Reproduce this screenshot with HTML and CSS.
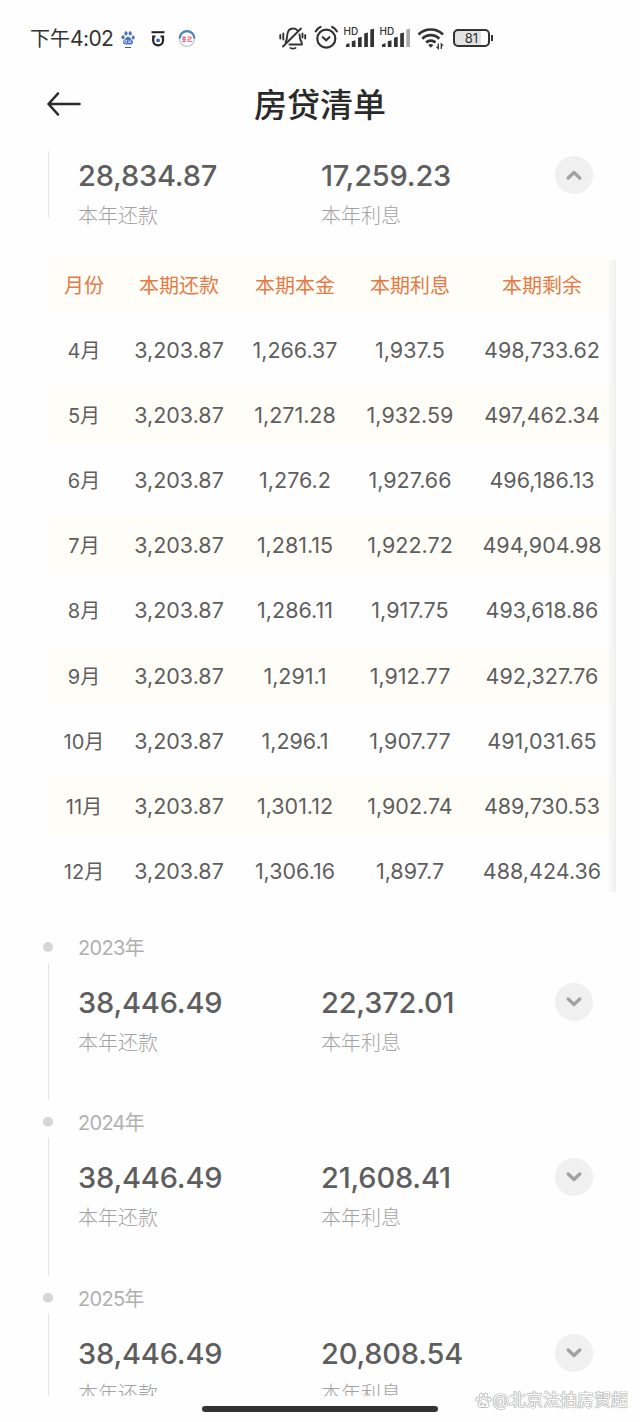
FILE: index.html
```html
<!DOCTYPE html>
<html lang="zh-CN">

<head>
    <meta charset="utf-8">
    <title>房贷清单</title>
    <meta name="viewport" content="width=device-width, initial-scale=1">
    <link rel="stylesheet" href="styles.css">
</head>

<body>
    <div class="status">
        <div class="status-left">
            <span class="time">下午<b>4:02</b></span>
            <svg class="ico-paw" width="14" height="20" viewBox="0 0 14 20">
                <g fill="#4a72c4">
                    <ellipse cx="2" cy="8.2" rx="1.6" ry="2" />
                    <ellipse cx="5" cy="4.4" rx="1.6" ry="2.1" />
                    <ellipse cx="9.2" cy="4.4" rx="1.6" ry="2.1" />
                    <ellipse cx="12.2" cy="8.4" rx="1.5" ry="2" />
                    <path d="M7 7.800c2 0 2.600 2 4 3.200 1.600 1.400 1.400 4.400-1.200 4.400H4.400C1.600 15.400 1.400 12.400 3 11c1.400-1.200 2-3.200 4-3.200z" />
                </g>
                <path d="M5.300 11.500a1.300 1.300 0 1 0 .1 2.200v-2.800M7.800 11.300v2.300h1.900v-2.300" fill="none" stroke="#fff" stroke-width=".7" />
                <path d="M4 18.500h6" stroke="#555" stroke-width="1" />
            </svg>
            <svg class="ico-app" width="14" height="18" viewBox="0 0 14 18">
                <path d="M.5 2.200h13" stroke="#222" stroke-width="2" />
                <path d="M4.500 6.500H2.200v4a4.900 4.900 0 0 0 9.800 0v-4H9.500" fill="none" stroke="#222" stroke-width="2.200" />
                <circle cx="7.100" cy="10.300" r="1.900" fill="#3f63b4" />
            </svg>
            <svg class="ico-badge" width="18" height="18" viewBox="0 0 18 18">
                <circle cx="9" cy="9" r="7.400" fill="#fff" stroke="#b9cdd3" stroke-width="1.400" />
                <path d="M1.600 8.500a7.400 7.400 0 0 1 14.800 0" fill="none" stroke="#4a83bd" stroke-width="2.200" />
                <path d="M4 7.300h4M4 9.300h4M4 11.300h4M6 6.500v4.800M9.500 7h3.500v2H10v2.300h4.200" fill="none" stroke="#dc5a80" stroke-width="1" />
            </svg>
        </div>
        <div class="status-right">
            <svg width="28" height="28" viewBox="279 24 28 28" fill="none" stroke="#333" stroke-width="1.900" stroke-linecap="round">
                <path d="M283 46.500L301 28.500" />
                <path d="M285.500 42c1.500-1.800 1.600-3.600 1.700-6.200.2-4.500 2.500-7.300 6-7.300 1.800 0 3.200.7 4.200 1.800M299.500 34.500c.3 4 .5 5.700 2.300 8.300v1.700H289.500" />
                <path d="M290.500 48c1.500.8 3.500.8 5 0" />
                <path d="M280.300 35v3.500M283.300 33.500v6M305.200 35v3.500M302.500 33.500v4" />
            </svg>
            <svg class="ico-alarm" width="24" height="26" viewBox="314 25 24 26" fill="none" stroke="#333" stroke-width="2.200" stroke-linecap="round">
                <circle cx="326.300" cy="38.700" r="9" />
                <path d="M315.800 31.300c1-2 2.600-3.500 4.600-4.300M336.800 31.300c-1-2-2.600-3.500-4.600-4.300" />
                <path d="M322.800 37.200l3.300 3 3.300-3" />
            </svg>
            <svg class="ico-signal" width="32" height="24" viewBox="343 26 32 24">
                <text x="343.500" y="35.200" class="hd">HD</text>
                <path d="M346 44.500l3.500-1.500v4H346zM351.800 41.300l3.700-1V47h-3.700zM358 37.700l3.700-1V47H358zM364.200 33.500l3.700-1V47h-3.700zM370.300 29.500l3.700-.8V47h-3.700z" fill="#333" />
            </svg>
            <svg class="ico-signal" width="32" height="24" viewBox="343 26 32 24">
                <text x="343.500" y="35.200" class="hd">HD</text>
                <path d="M346 44.500l3.500-1.500v4H346zM351.800 41.300l3.700-1V47h-3.700zM358 37.700l3.700-1V47H358zM364.200 33.500l3.700-1V47h-3.700z" fill="#333" />
                <path d="M370.300 29.500l3.700-.8V47h-3.700z" fill="#aaa" />
            </svg>
            <svg class="ico-wifi" width="28" height="24" viewBox="417 27 28 24" fill="none" stroke="#333" stroke-width="2.700">
                <path d="M418.500 34.500a17.500 17.500 0 0 1 24.500 0M422.300 38.700a12 12 0 0 1 17 0M426.100 42.500a6.800 6.800 0 0 1 9.400 0" />
                <path d="M430.800 47.800l-2.600-2.700a4 4 0 0 1 5.200 0z" fill="#333" stroke="none" />
                <path d="M438.300 43.500v5l-1.700-1.700M441.300 49v-5l1.700 1.700" stroke-width="1.300" />
            </svg>
            <div class="battery">81</div>
        </div>
    </div>

    <div class="header">
        <svg class="back" width="36" height="26" viewBox="0 0 36 26" fill="none" stroke="#2a2a2a" stroke-width="2.600" stroke-linecap="round" stroke-linejoin="round">
            <path d="M12 2.500L2.500 13 12 23.500M2.500 13H33.500" />
        </svg>
        <h1>房贷清单</h1>
    </div>

    <div class="list">
        <div class="year year-open">
            <div class="rail"><i class="line"></i></div>
            <div class="sums">
                <div class="sum">
                    <p class="num">28,834.87</p>
                    <p class="txt">本年还款</p>
                </div>
                <div class="sum">
                    <p class="num">17,259.23</p>
                    <p class="txt">本年利息</p>
                </div>
                <span class="toggle"><svg width="18" height="12" viewBox="0 0 18 12"><path d="M3.200 9L9 3.600 14.800 9" /></svg></span>
            </div>
        </div>

        <div class="detail">
            <ul class="row row-head">
                <li>月份</li><li>本期还款</li><li>本期本金</li><li>本期利息</li><li>本期剩余</li>
            </ul>
            <ul class="row">
                <li>4月</li><li>3,203.87</li><li>1,266.37</li><li>1,937.5</li><li>498,733.62</li>
            </ul>
            <ul class="row">
                <li>5月</li><li>3,203.87</li><li>1,271.28</li><li>1,932.59</li><li>497,462.34</li>
            </ul>
            <ul class="row">
                <li>6月</li><li>3,203.87</li><li>1,276.2</li><li>1,927.66</li><li>496,186.13</li>
            </ul>
            <ul class="row">
                <li>7月</li><li>3,203.87</li><li>1,281.15</li><li>1,922.72</li><li>494,904.98</li>
            </ul>
            <ul class="row">
                <li>8月</li><li>3,203.87</li><li>1,286.11</li><li>1,917.75</li><li>493,618.86</li>
            </ul>
            <ul class="row">
                <li>9月</li><li>3,203.87</li><li>1,291.1</li><li>1,912.77</li><li>492,327.76</li>
            </ul>
            <ul class="row">
                <li>10月</li><li>3,203.87</li><li>1,296.1</li><li>1,907.77</li><li>491,031.65</li>
            </ul>
            <ul class="row">
                <li>11月</li><li>3,203.87</li><li>1,301.12</li><li>1,902.74</li><li>489,730.53</li>
            </ul>
            <ul class="row">
                <li>12月</li><li>3,203.87</li><li>1,306.16</li><li>1,897.7</li><li>488,424.36</li>
            </ul>
        </div>

        <div class="year">
            <div class="rail"><i class="dot"></i><i class="line"></i></div>
            <div class="year-main">
                <h2>2023年</h2>
                <div class="sums">
                    <div class="sum">
                        <p class="num">38,446.49</p>
                        <p class="txt">本年还款</p>
                    </div>
                    <div class="sum">
                        <p class="num">22,372.01</p>
                        <p class="txt">本年利息</p>
                    </div>
                    <span class="toggle"><svg width="18" height="12" viewBox="0 0 18 12"><path d="M3.200 3L9 8.400 14.800 3" /></svg></span>
                </div>
            </div>
        </div>

        <div class="year">
            <div class="rail"><i class="dot"></i><i class="line"></i></div>
            <div class="year-main">
                <h2>2024年</h2>
                <div class="sums">
                    <div class="sum">
                        <p class="num">38,446.49</p>
                        <p class="txt">本年还款</p>
                    </div>
                    <div class="sum">
                        <p class="num">21,608.41</p>
                        <p class="txt">本年利息</p>
                    </div>
                    <span class="toggle"><svg width="18" height="12" viewBox="0 0 18 12"><path d="M3.200 3L9 8.400 14.800 3" /></svg></span>
                </div>
            </div>
        </div>

        <div class="year">
            <div class="rail"><i class="dot"></i><i class="line"></i></div>
            <div class="year-main">
                <h2>2025年</h2>
                <div class="sums">
                    <div class="sum">
                        <p class="num">38,446.49</p>
                        <p class="txt">本年还款</p>
                    </div>
                    <div class="sum">
                        <p class="num">20,808.54</p>
                        <p class="txt">本年利息</p>
                    </div>
                    <span class="toggle"><svg width="18" height="12" viewBox="0 0 18 12"><path d="M3.200 3L9 8.400 14.800 3" /></svg></span>
                </div>
            </div>
        </div>
    </div>

    <div class="home-bar"></div>
    <div class="watermark">
        <svg width="17" height="17" viewBox="0 0 17 17" fill="#fff" stroke="#aaa" stroke-width=".8">
            <ellipse cx="2.600" cy="7.300" rx="1.800" ry="2.300" />
            <ellipse cx="6.200" cy="3.400" rx="1.800" ry="2.400" />
            <ellipse cx="10.800" cy="3.400" rx="1.800" ry="2.400" />
            <ellipse cx="14.400" cy="7.300" rx="1.800" ry="2.300" />
            <path d="M8.500 7c2.200 0 2.800 2 4.300 3.300 2 1.800 1.400 5.200-1.300 5.200H5.500c-2.700 0-3.300-3.400-1.300-5.200C5.700 9 6.300 7 8.500 7z" />
            <path d="M7 11.300a1.200 1.200 0 1 0 0 2V10M9 11.200v2h2v-2" fill="none" />
        </svg>
        <span>@北京法拍房贺超</span>
    </div>
</body>

</html>
```

FILE: styles.css
```css
* {
    margin: 0;
    padding: 0;
    list-style: none;
    box-sizing: border-box;
}

body {
    position: relative;
    width: 640px;
    height: 1422px;
    overflow: hidden;
    background: #fefefe;
    color: #5e5e5e;
    font-family: Inter, "Noto Sans CJK SC", sans-serif;
}

svg {
    display: block;
    flex: none;
}

/* 状态栏 */
.status {
    display: flex;
    height: 76px;
    padding-left: 30px;
}

.status-left,
.status-right {
    display: flex;
    align-items: center;
    height: 76px;
}

.status-left {
    width: 249px;
    padding-top: 1px;
}

.time {
    width: 91px;
    padding-top: 1px;
    font-size: 20px;
    line-height: 28px;
    color: #333;
    white-space: nowrap;
}

.time b {
    font-size: 21px;
    font-weight: 400;
    letter-spacing: -0.6px;
}

.ico-app {
    margin-left: 16px;
}

.ico-badge {
    margin-left: 13px;
}

.ico-alarm {
    margin-left: 7px;
}

.ico-signal {
    margin-left: 5px;
}

.ico-signal + .ico-signal {
    margin-left: 4px;
}

.ico-wifi {
    margin: 2px 0 0 6px;
}

.hd {
    font-size: 10px;
    font-weight: 500;
    fill: #333;
}

.battery {
    position: relative;
    width: 37px;
    height: 18px;
    margin-left: 8px;
    border: 2px solid #333;
    border-radius: 5px;
    background: linear-gradient(90deg, #e2e2e2 80%, #fff 80%);
    font-size: 13px;
    font-weight: 400;
    line-height: 14px;
    text-align: center;
    color: #333;
}

.battery:after {
    position: absolute;
    top: 4px;
    right: -5px;
    content: "";
    width: 2px;
    height: 6px;
    background: #333;
}

/* 标题 */
.header {
    display: flex;
    align-items: center;
    height: 75px;
    padding: 0 46px 19px;
}

.header h1 {
    flex: 1;
    padding: 2px 36px 0 0;
    font-size: 33px;
    font-weight: 500;
    line-height: 48px;
    text-align: center;
    color: #2a2a2a;
}

/* 年度列表 */
.list {
    height: 1245px;
    padding-left: 40px;
    overflow: hidden;
}

.year {
    display: flex;
    height: 175.300px;
}

.year-open {
    height: 105px;
}

.rail {
    display: flex;
    flex-direction: column;
    align-items: center;
    width: 16px;
    margin-right: 22px;
}

.year-open .line {
    flex: none;
    height: 67px;
    margin: 0;
}

.dot {
    width: 10px;
    height: 10px;
    margin-top: 7px;
    border-radius: 50%;
    background: #d6d6d6;
}

.line {
    flex: 1;
    width: 1px;
    margin: 11px 0 10px;
    background: #e4e4e4;
}

.year h2 {
    height: 24px;
    margin-bottom: 24px;
    padding-top: 1px;
    font-size: 20px;
    font-weight: 400;
    line-height: 24px;
    letter-spacing: -0.7px;
    color: #b0b0b0;
}

.sums {
    display: flex;
}

.year-open .sums {
    padding-top: 5px;
}

.sum {
    width: 243px;
}

.num {
    font-size: 29px;
    font-weight: 500;
    line-height: 40px;
    letter-spacing: -0.2px;
}

.txt {
    margin-top: 8px;
    font-size: 20px;
    font-weight: 300;
    line-height: 24px;
    color: #a2a2a2;
}

.toggle {
    display: flex;
    align-items: center;
    justify-content: center;
    width: 38px;
    height: 38px;
    margin-left: -9px;
    border-radius: 50%;
    background: #f0f0f0;
}

.toggle path {
    fill: none;
    stroke: #a2a2a2;
    stroke-width: 3.400;
    stroke-linecap: round;
    stroke-linejoin: round;
}

/* 月份明细 */
.detail {
    position: relative;
    width: 568px;
    height: 679px;
    margin-left: 8px;
}

.detail:after {
    position: absolute;
    top: 4px;
    right: 0;
    content: "";
    width: 9px;
    height: 632px;
    background: linear-gradient(90deg, rgba(0, 0, 0, 0), rgba(0, 0, 0, 0.06));
}

.row {
    display: grid;
    grid-template-columns: 72px 118px 114px 116px 148px;
    height: 58px;
    margin-bottom: 7.100px;
    font-size: 21.500px;
    line-height: 58px;
    text-align: center;
    white-space: nowrap;
}

.row:nth-of-type(odd) {
    background: linear-gradient(90deg, #fffdf8 558px, #fefefe 566px);
}

.row li:first-child {
    padding-top: 1px;
    font-size: 20px;
}

.row.row-head li {
    padding-top: 1px;
    font-size: 20px;
    color: #e57a45;
}

/* 底部 */
.home-bar {
    position: absolute;
    left: 202px;
    bottom: 10px;
    width: 236px;
    height: 6px;
    border-radius: 3px;
    background: #333;
}

.watermark {
    position: absolute;
    right: 12px;
    bottom: 10px;
    display: flex;
    align-items: center;
    gap: 1px;
    font-size: 17px;
    line-height: 24px;
    color: #fff;
    white-space: nowrap;
    text-shadow: 0 0 1px #888, 0 0 1px #888, 0 0 1px #999;
}
```
